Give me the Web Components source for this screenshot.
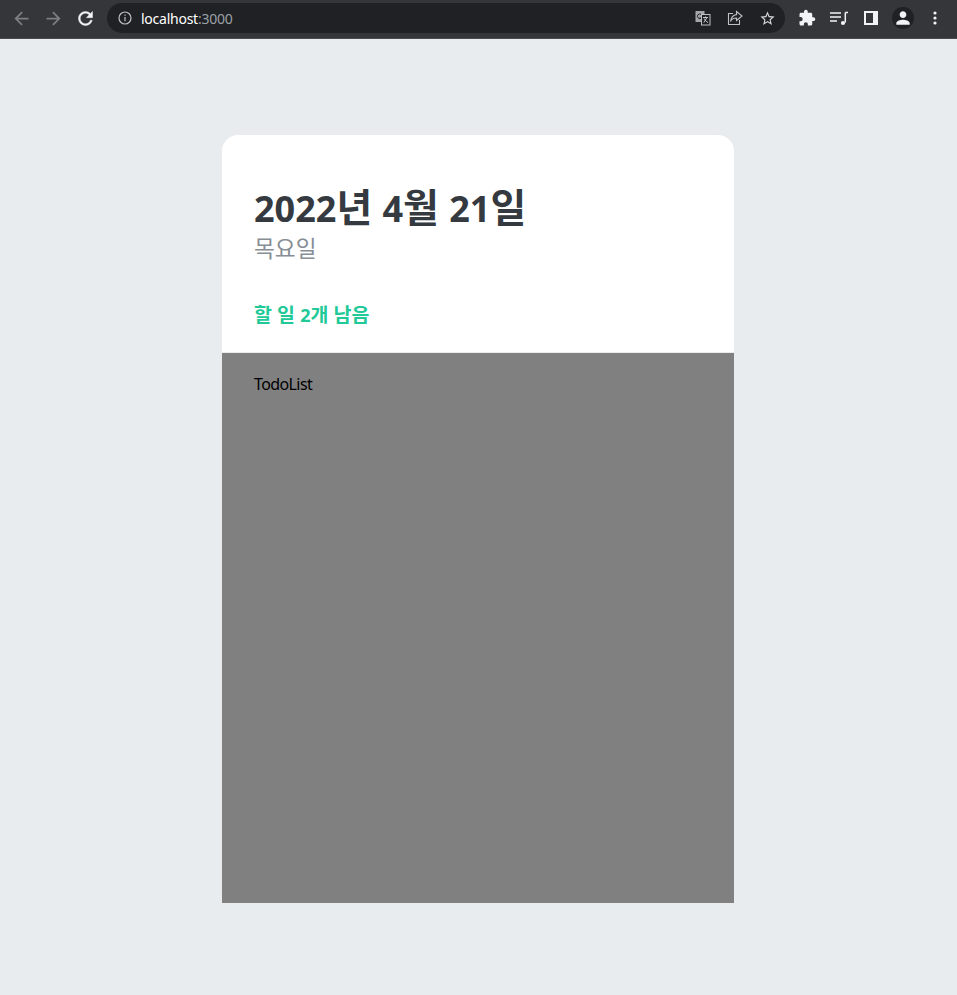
<!DOCTYPE html>
<html lang="ko">
<head>
<meta charset="utf-8">
<title>localhost:3000</title>
<style>
  html, body { margin: 0; height: 100%; }
  body {
    background: #e9ecef;
    font-family: "Noto Sans", "Noto Sans CJK KR", sans-serif;
    display: flex;
    flex-direction: column;
    height: 995px;
    overflow: hidden;
  }
</style>
</head>
<body>
<browser-bar url-host="localhost" url-port=":3000"></browser-bar>
<todo-template>
  <todo-head slot="head" date="2022년 4월 21일" day="목요일" left="할 일 2개 남음"></todo-head>
  <todo-list>TodoList</todo-list>
</todo-template>

<script>
class BrowserBar extends HTMLElement {
  constructor() {
    super();
    this.attachShadow({ mode: 'open' });
  }

  connectedCallback() {
    this.shadowRoot.innerHTML = `
    <style>
      :host { display: block; flex: none; height: 39px; box-sizing: border-box; background: #35363a; border-bottom: 1px solid #4a4b4f; }
      .bar { display: flex; align-items: center; height: 36px; }
      .nav { display: flex; align-items: center; gap: 8px; margin-left: 9px; }
      .nav svg, .tools svg { display: block; }
      .btn { width: 24px; height: 24px; display: flex; align-items: center; justify-content: center; }
      .omni { margin-left: 10px; width: 678px; height: 30px; border-radius: 15px; background: #202124; display: flex; align-items: center; box-sizing: border-box; padding-left: 11px; }
      .host { margin-left: 9px; font: 14px "Noto Sans", sans-serif; letter-spacing: -.25px; color: #fff; }
      .port { color: #9aa0a6; }
      .right { margin-left: auto; display: flex; align-items: center; gap: 8px; margin-right: 6px; }
      .tools { display: flex; align-items: center; gap: 8px; margin-left: 10px; }
      .avatar { width: 22px; height: 22px; border-radius: 50%; background: #202124; display: flex; align-items: center; justify-content: center; }
    </style>
    <div class="bar">
      <div class="nav">
        <div class="btn"><svg width="21" height="21" viewBox="0 0 24 24" fill="#7c7e82"><path d="M20 11H7.830l5.590-5.590L12 4l-8 8 8 8 1.410-1.410L7.830 13H20v-2z"/></svg></div>
        <div class="btn"><svg width="21" height="21" viewBox="0 0 24 24" fill="#7c7e82"><path d="M12 4l-1.410 1.410L16.170 11H4v2h12.170l-5.580 5.590L12 20l8-8z"/></svg></div>
        <div class="btn"><svg width="21" height="21" viewBox="0 0 24 24" fill="#f1f3f4" stroke="#f1f3f4" stroke-width=".5"><path d="M17.650 6.350C16.200 4.900 14.210 4 12 4c-4.420 0-7.990 3.580-7.990 8s3.570 8 7.990 8c3.730 0 6.840-2.550 7.730-6h-2.080c-.82 2.330-3.040 4-5.650 4-3.310 0-6-2.690-6-6s2.690-6 6-6c1.660 0 3.140.69 4.220 1.780L13 11h7V4l-2.350 2.350z"/></svg></div>
      </div>
      <div class="omni">
        <svg width="14" height="14" viewBox="0 0 14 14" fill="none" stroke="#bdc1c6" stroke-width="1.200"><circle cx="7" cy="7" r="6"/><path d="M7 6v4.300M7 3.500v1.300"/></svg>
        <span class="host">${this.getAttribute('url-host')}<span class="port">${this.getAttribute('url-port')}</span></span>
        <div class="right">
          <div class="btn"><svg width="16" height="16" viewBox="0 0 16 16"><rect x="0.500" y="1" width="9" height="11" fill="#a3a6aa"/><path d="M6.300 4.600A2.300 2.300 0 1 0 6.300 8H4.400" fill="none" stroke="#202124" stroke-width="1"/><rect x="6.500" y="4.500" width="8.500" height="10.500" fill="#202124" stroke="#bdc1c6"/><path d="M8 7.500h5M10.500 6.500v1M8.800 12.500l3.200-5M9.200 8.500c.8 1.800 2 3 3.800 4" stroke="#e8eaed" fill="none" stroke-width=".8"/></svg></div>
          <div class="btn"><svg width="16" height="16" viewBox="0 0 16 16" fill="none" stroke="#bdc1c6" stroke-width="1.100"><path d="M6 3.500H1.500v11h11V10"/><path d="M9.500 1.500 15 6l-5.500 4.500V8C6.500 8 4.500 9 3.500 11.500 4 7.500 6 5 9.500 4.600z"/></svg></div>
          <div class="btn"><svg width="17" height="17" viewBox="0 0 24 24" fill="#d4d7da"><path d="M22 9.240l-7.190-.62L12 2 9.190 8.630 2 9.240l5.460 4.730L5.820 21 12 17.270 18.180 21l-1.630-7.030L22 9.240zM12 15.400l-3.760 2.270 1-4.280-3.320-2.880 4.380-.38L12 6.100l1.710 4.040 4.380.38-3.320 2.880 1 4.280L12 15.400z"/></svg></div>
        </div>
      </div>
      <div class="tools">
        <div class="btn"><svg width="18" height="18" viewBox="0 0 24 24" fill="#f1f3f4"><path d="M20.500 11H19V7c0-1.100-.9-2-2-2h-4V3.500C13 2.120 11.880 1 10.500 1S8 2.120 8 3.500V5H4c-1.100 0-1.990.9-1.990 2v3.800H3.500c1.490 0 2.700 1.210 2.700 2.700s-1.210 2.700-2.700 2.700H2V20c0 1.100.9 2 2 2h3.800v-1.500c0-1.490 1.210-2.700 2.700-2.700 1.490 0 2.700 1.210 2.700 2.700V22H17c1.100 0 2-.9 2-2v-4h1.500c1.380 0 2.500-1.120 2.500-2.500S21.880 11 20.500 11z"/></svg></div>
        <div class="btn"><svg width="18" height="18" viewBox="0 0 18 18" fill="none" stroke="#f1f3f4" stroke-width="1.500"><path d="M0 4h11M0 8h11M0 12h7"/><path d="M15.300 3.500h2.700M15.300 3.500v10"/><circle cx="13" cy="14" r="2.100" fill="#f1f3f4" stroke="none"/></svg></div>
        <div class="btn"><svg width="14" height="14" viewBox="0 0 14 14"><path fill-rule="evenodd" fill="#f1f3f4" d="M0 0h14v14H0zM2 2v10h7V2z"/></svg></div>
        <div class="btn"><div class="avatar"><svg width="20" height="20" viewBox="0 0 24 24" fill="#f1f3f4"><path d="M12 12c2.210 0 4-1.790 4-4s-1.790-4-4-4-4 1.790-4 4 1.790 4 4 4zm0 2c-2.670 0-8 1.340-8 4v2h16v-2c0-2.660-5.330-4-8-4z"/></svg></div></div>
        <div class="btn"><svg width="4" height="14" viewBox="0 0 4 14" fill="#f1f3f4"><circle cx="2" cy="2" r="1.600"/><circle cx="2" cy="7" r="1.600"/><circle cx="2" cy="12" r="1.600"/></svg></div>
      </div>
    </div>`;
  }
}
customElements.define('browser-bar', BrowserBar);

class TodoTemplate extends HTMLElement {
  constructor() {
    super();
    this.attachShadow({ mode: 'open' }).innerHTML = `
    <style>
      :host { display: flex; flex-direction: column; width: 512px; height: 768px; margin: 96px 0 0 222px; border-radius: 16px; background: #fff; flex: none; }
      .body { flex: 1; display: flex; flex-direction: column; min-height: 0; }
    </style>
    <slot name="head"></slot>
    <div class="body"><slot></slot></div>`;
  }
}
customElements.define('todo-template', TodoTemplate);

// hangul gets a bigger size than the digits, it is narrower here than in the original font
const wrapHangul = text => text.replace(/[\uAC00-\uD7A3]+/g, m => `<span class="ko">${m}</span>`);

class TodoHead extends HTMLElement {
  constructor() {
    super();
    this.attachShadow({ mode: 'open' });
  }

  connectedCallback() {
    this.shadowRoot.innerHTML = `
    <style>
      :host { display: block; box-sizing: border-box; height: 218px; padding: 49px 32px 24px; border-bottom: 1px solid #e9ecef; }
      h1 { margin: 0; font-size: 36px; line-height: 50px; font-weight: 700; color: #343a40; word-spacing: 1px; }
      .day { font-size: 21px; line-height: 29px; margin-top: 1px; color: #868e96; }
      .tasks-left { font-size: 18px; line-height: 25px; font-weight: 700; color: #20c997; margin-top: 39px; word-spacing: .5px; }
      .ko { font-size: 1.08em; line-height: 0; }
    </style>
    <h1>${wrapHangul(this.getAttribute('date'))}</h1>
    <div class="day">${wrapHangul(this.getAttribute('day'))}</div>
    <div class="tasks-left">${wrapHangul(this.getAttribute('left'))}</div>`;
  }
}
customElements.define('todo-head', TodoHead);

class TodoList extends HTMLElement {
  constructor() {
    super();
    this.attachShadow({ mode: 'open' }).innerHTML = `
    <style>
      :host { display: block; flex: 1; box-sizing: border-box; background: #808080; padding: 19px 32px 48px; font-size: 16px; line-height: 24px; letter-spacing: -.6px; color: #000; }
    </style>
    <slot></slot>`;
  }
}
customElements.define('todo-list', TodoList);
</script>
</body>
</html>
